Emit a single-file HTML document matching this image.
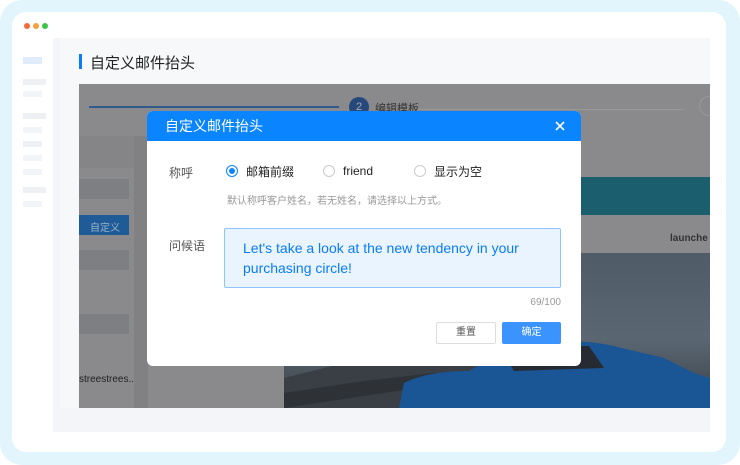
<!DOCTYPE html>
<html><head><meta charset="utf-8"><style>
*{margin:0;padding:0;box-sizing:border-box}
body{width:740px;height:465px;overflow:hidden;background:#fff;font-family:"Liberation Sans","Noto Sans CJK SC",sans-serif;position:relative}
.abs{position:absolute}
</style></head><body>
<div class="abs" style="left:0;top:0;width:740px;height:465px;background:#e3f5fc;border-radius:22px"></div>
<div class="abs" style="left:12px;top:12px;width:714px;height:440px;background:#fff;border-radius:14px"></div>
<div class="abs" style="left:24px;top:23px;width:6px;height:6px;border-radius:3px;background:#f26b3a"></div>
<div class="abs" style="left:33px;top:23px;width:6px;height:6px;border-radius:3px;background:#f5a03a"></div>
<div class="abs" style="left:42px;top:23px;width:6px;height:6px;border-radius:3px;background:#3ec24a"></div>
<div class="abs" style="left:23px;top:57px;width:19px;height:7px;background:#e1ecfb"></div>
<div class="abs" style="left:23px;top:79px;width:23px;height:6px;background:#eef0f4"></div>
<div class="abs" style="left:23px;top:91px;width:19px;height:6px;background:#f3f4f7"></div>
<div class="abs" style="left:23px;top:113px;width:23px;height:6px;background:#eef0f4"></div>
<div class="abs" style="left:23px;top:127px;width:19px;height:6px;background:#f3f4f7"></div>
<div class="abs" style="left:23px;top:141px;width:19px;height:6px;background:#eef0f4"></div>
<div class="abs" style="left:23px;top:155px;width:19px;height:6px;background:#f3f4f7"></div>
<div class="abs" style="left:23px;top:169px;width:19px;height:6px;background:#f3f4f7"></div>
<div class="abs" style="left:23px;top:187px;width:23px;height:6px;background:#eef0f4"></div>
<div class="abs" style="left:23px;top:201px;width:19px;height:6px;background:#f3f4f7"></div>
<div class="abs" style="left:53px;top:38px;width:657px;height:394px;background:#f4f5f8"></div>
<div class="abs" style="left:60px;top:38px;width:650px;height:370px;background:#f7f8fa"></div>
<div class="abs" style="left:79px;top:54px;width:3px;height:15px;background:#0a7cf5"></div>
<div class="abs" style="left:90px;top:52px;font-size:15px;color:#222">自定义邮件抬头</div>
<div class="abs" style="left:79px;top:84px;width:631px;height:324px;background:#8a8a8c;overflow:hidden">
  <div class="abs" style="left:10px;top:22px;width:250px;height:2px;background:#2f5a8a"></div>
  <div class="abs" style="left:270px;top:13px;width:20px;height:20px;border-radius:10px;background:#24497a;color:#aaa;font-size:11px;text-align:center;line-height:20px">2</div>
  <div class="abs" style="left:296px;top:16px;font-size:11px;color:#333">编辑模板</div>
  <div class="abs" style="left:340px;top:25px;width:265px;height:1px;background:#999"></div>
  <div class="abs" style="left:620px;top:12px;width:20px;height:20px;border-radius:10px;border:1px solid #999"></div>
  <div class="abs" style="left:0;top:52px;width:55px;height:32px;background:#858587"></div>
  <div class="abs" style="left:0;top:95px;width:50px;height:20px;background:#7e7f82"></div>
  <div class="abs" style="left:0;top:131px;width:50px;height:20px;background:#1f5b96"></div>
  <div class="abs" style="left:11px;top:135px;font-size:10px;color:#9cb3cc">自定义</div>
  <div class="abs" style="left:0;top:166px;width:50px;height:20px;background:#7e7f82"></div>
  <div class="abs" style="left:0;top:230px;width:50px;height:20px;background:#7e7f82"></div>
  <div class="abs" style="left:0;top:290px;font-size:10px;color:#222">streestrees...</div>
  <div class="abs" style="left:55px;top:52px;width:14px;height:272px;background:#818184"></div>
  <div class="abs" style="left:502px;top:93px;width:129px;height:38px;background:#1b5f6e"></div>
  <div class="abs" style="left:591px;top:149px;font-size:10px;font-weight:bold;color:#333">launche</div>
  <div class="abs" style="left:205px;top:169px;width:426px;height:155px;background:linear-gradient(180deg,#4f5c68 0%,#5a6772 55%,#3a4047 100%)"></div>
  <svg class="abs" style="left:205px;top:169px" width="426" height="155">
    <path d="M0 125 L60 110 L120 95 L180 90 L230 100 L280 112 L330 122 L380 130 L426 145 L426 155 L0 155 Z" fill="#3a3f45"/>
    <path d="M0 140 L80 128 L150 120 L200 125 L0 155 Z" fill="#2e3237"/>
    <path d="M115 155 L120 130 C140 120 165 118 185 118 L215 100 C240 88 290 85 325 92 L380 105 L410 120 L426 125 L426 155 Z" fill="#1a5596"/>
    <path d="M220 102 L260 93 L305 93 L320 115 L230 118 Z" fill="#262b33"/>
  </svg>
</div>
<div class="abs" style="left:147px;top:111px;width:434px;height:255px;background:#fff;border-radius:6px;overflow:hidden">
  <div style="height:30px;background:#0a84ff;color:#fff;font-size:14px;line-height:30px;padding-left:18px">自定义邮件抬头</div>
  <svg class="abs" style="left:408px;top:10px" width="10" height="10"><path d="M1 1L9 9M9 1L1 9" stroke="#fff" stroke-width="1.6"/></svg>
  <div class="abs" style="left:22px;top:53px;font-size:12px;color:#555">称呼</div>
  <div class="abs" style="left:79px;top:54px;width:12px;height:12px;border-radius:6px;border:1px solid #0a84ff"><div style="margin:2px;width:6px;height:6px;border-radius:3px;background:#0a84ff"></div></div>
  <div class="abs" style="left:99px;top:52px;font-size:12px;color:#222">邮箱前缀</div>
  <div class="abs" style="left:176px;top:54px;width:12px;height:12px;border-radius:6px;border:1px solid #ccc"></div>
  <div class="abs" style="left:196px;top:52px;font-size:12px;color:#222;line-height:17px">friend</div>
  <div class="abs" style="left:267px;top:54px;width:12px;height:12px;border-radius:6px;border:1px solid #ccc"></div>
  <div class="abs" style="left:287px;top:52px;font-size:12px;color:#222">显示为空</div>
  <div class="abs" style="left:80px;top:81px;font-size:10px;color:#999">默认称呼客户姓名，若无姓名，请选择以上方式。</div>
  <div class="abs" style="left:22px;top:126px;font-size:12px;color:#555">问候语</div>
  <div class="abs" style="left:77px;top:117px;width:337px;height:60px;background:#eaf4ff;border:1px solid #8cc4fb;border-radius:2px;padding:9px 0 0 18px;font-size:14px;line-height:20px;color:#0a7cf5">Let's take a look at the new tendency in your purchasing circle!</div>
  <div class="abs" style="left:370px;top:186px;font-size:10px;color:#999;width:44px;text-align:right">69/100</div>
  <div class="abs" style="left:289px;top:211px;width:60px;height:22px;border:1px solid #ddd;border-radius:2px;font-size:10px;color:#555;text-align:center;line-height:20px">重置</div>
  <div class="abs" style="left:355px;top:211px;width:59px;height:22px;background:#3b93fd;border-radius:2px;font-size:10px;color:#fff;text-align:center;line-height:22px">确定</div>
</div>
</body></html>
